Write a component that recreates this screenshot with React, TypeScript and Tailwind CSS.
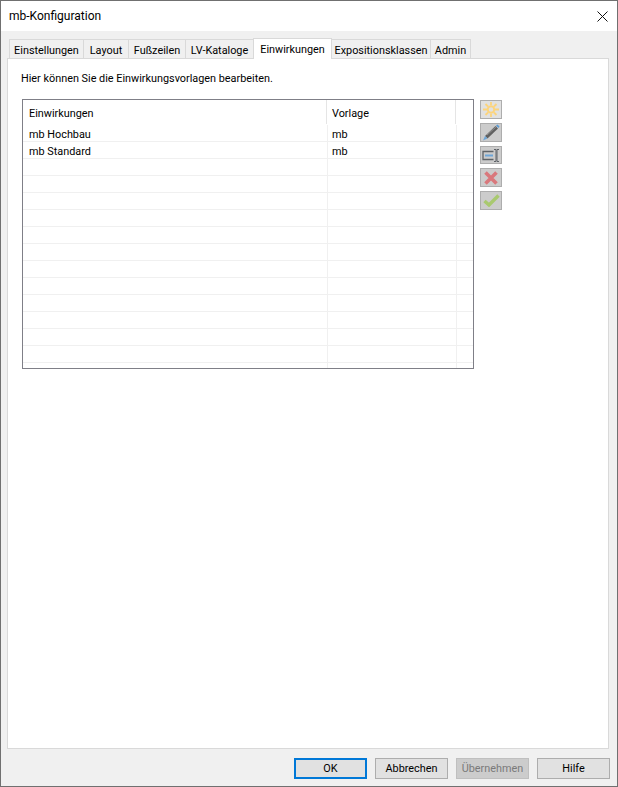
const tabs = [
  { label: "Einstellungen", width: "w-[75px]" },
  { label: "Layout", width: "w-[46px]" },
  { label: "Fußzeilen", width: "w-[58px]" },
  { label: "LV-Kataloge", width: "w-[69px]" },
  { label: "Einwirkungen", width: "w-[79px]", active: true },
  { label: "Expositionsklassen", width: "w-[100px]" },
  { label: "Admin", width: "w-[41px]" },
];

const rows = [
  { name: "mb Hochbau", template: "mb" },
  { name: "mb Standard", template: "mb" },
  ...Array.from({ length: 14 }, () => ({ name: "", template: "" })),
];

function ToolButton({ light, short, children }: { light?: boolean; short?: boolean; children: React.ReactNode }) {
  return (
    <div className={`w-[22px] border border-[#adadad] flex items-center justify-center ${short ? "h-[18px]" : "h-[19px]"} ${light ? "bg-[#e1e1e1]" : "bg-[#cccccc]"}`}>
      {children}
    </div>
  );
}

function DialogButton({ label, primary, disabled }: { label: string; primary?: boolean; disabled?: boolean }) {
  let cls = "border border-[#adadad] bg-[#e1e1e1] text-black";
  if (primary) cls = "border-2 border-[#0078d7] bg-[#e1e1e1] text-black";
  if (disabled) cls = "border border-[#bfbfbf] bg-[#cccccc] text-[#7a7a7a]";
  return <div className={`w-[73px] h-[21px] pt-px flex items-center justify-center ${cls}`}>{label}</div>;
}

export default function App() {
  return (
    <div className="w-[618px] h-[787px] flex flex-col border border-[#707070] bg-[#f0f0f0] text-[10.85px] text-black font-['Roboto','Liberation_Sans',sans-serif] overflow-hidden">
      <div className="h-[30px] shrink-0 bg-white flex items-center justify-between pl-2 pr-[9px]">
        <span className="text-[12px]">mb-Konfiguration</span>
        <svg width="11" height="11" viewBox="0 0 11 11" fill="none" stroke="#111" strokeWidth="1">
          <path d="M0.5 0.5L10.5 10.5M10.5 0.5L0.5 10.5" />
        </svg>
      </div>

      <div className="flex items-end h-[27px] pl-2 shrink-0">
        {tabs.map((t) =>
          t.active ? (
            <div key={t.label} className={`${t.width} h-[21px] -mb-px relative z-10 bg-white border border-b-0 border-[#d9d9d9] flex items-start justify-center pt-[3px] -mr-px`}>
              {t.label}
            </div>
          ) : (
            <div key={t.label} className={`${t.width} h-[19px] pt-[5px] bg-[#f0f0f0] border border-b-0 border-[#d9d9d9] -mr-px flex items-center justify-center`}>
              {t.label}
            </div>
          ),
        )}
      </div>

      <div className="ml-[6px] w-[602px] h-[691px] shrink-0 bg-white border border-[#d9d9d9] pl-[13px] pt-[10px]">
        <div className="h-[16px] pt-[5px] flex items-center">Hier können Sie die Einwirkungsvorlagen bearbeiten.</div>
        <div className="flex mt-[14px] ml-px gap-[6px]">
          <div className="w-[452px] h-[270px] border border-[#7f7f87] overflow-hidden">
            <div className="flex h-[25px]">
              <div className="w-[304px] pl-[6px] pt-[5px] flex items-center border-r border-[#e5e5e5] mb-px">Einwirkungen</div>
              <div className="w-[129px] pl-[5px] pt-[5px] flex items-center border-r border-[#e5e5e5] mb-px">Vorlage</div>
            </div>
            {rows.map((r, i) => (
              <div key={i} className="flex h-[17px] w-[450px] border-b border-[#f0f0f0]">
                <div className="w-[305px] pl-[6px] pt-[5px] flex items-center border-r border-[#f0f0f0]">{r.name}</div>
                <div className="w-[129px] pl-[4px] pt-[5px] flex items-center border-r border-[#f0f0f0]">{r.template}</div>
              </div>
            ))}
          </div>

          <div className="flex flex-col gap-1 pt-px">
            <ToolButton light>
              <svg width="16" height="15" viewBox="0 0 16 15" fill="none" stroke="#fcd47c">
                <circle cx="8" cy="7.5" r="3.2" strokeWidth="1.8" />
                <path d="M8 0V3.5M8 11.5V15M0 7.5H4M12 7.5H16M2.5 2L5 4.5M13.5 2L11 4.5M2.5 13L5 10.5M13.5 13L11 10.5" strokeWidth="1.8" />
              </svg>
            </ToolButton>
            <ToolButton>
              <svg width="18" height="17" viewBox="0 0 18 17" fill="none">
                <path d="M3 12L13.5 2L16 4.5L5.5 14.5Z" fill="#606060" />
                <path d="M5 11L14.5 2.5" stroke="#9a9a9a" strokeWidth="0.8" />
                <path d="M14 1.5L15.5 0.5L17.5 2.5L16.5 4Z" fill="#5b9bd5" />
                <path d="M3 12L5.5 14.5L1 16.5Z" fill="#6ea6d8" />
              </svg>
            </ToolButton>
            <ToolButton short>
              <svg width="18" height="13" viewBox="0 0 18 13" fill="none" stroke="#5f6368">
                <path d="M11.5 2.5H1V10.5H11.5" strokeWidth="1.3" />
                <path d="M3 6.5H11" stroke="#6ea6d8" strokeWidth="2" />
                <path d="M12 0.5H14V12.5H12M17 0.5H15V12.5H17" strokeWidth="1" />
              </svg>
            </ToolButton>
            <ToolButton>
              <svg width="14" height="14" viewBox="0 0 14 14" fill="none" stroke="#d9787c" strokeWidth="3.6">
                <path d="M1.5 1.5L12.5 12.5M12.5 1.5L1.5 12.5" />
              </svg>
            </ToolButton>
            <ToolButton>
              <svg width="17" height="13" viewBox="0 0 17 13" fill="none" stroke="#a9c96f" strokeWidth="3.4">
                <path d="M1.5 7L6 11L15.5 1.5" />
              </svg>
            </ToolButton>
          </div>
        </div>
      </div>

      <div className="flex justify-end gap-2 pr-[7px] mt-[9px]">
        <DialogButton label="OK" primary />
        <DialogButton label="Abbrechen" />
        <DialogButton label="Übernehmen" disabled />
        <DialogButton label="Hilfe" />
      </div>
    </div>
  );
}
